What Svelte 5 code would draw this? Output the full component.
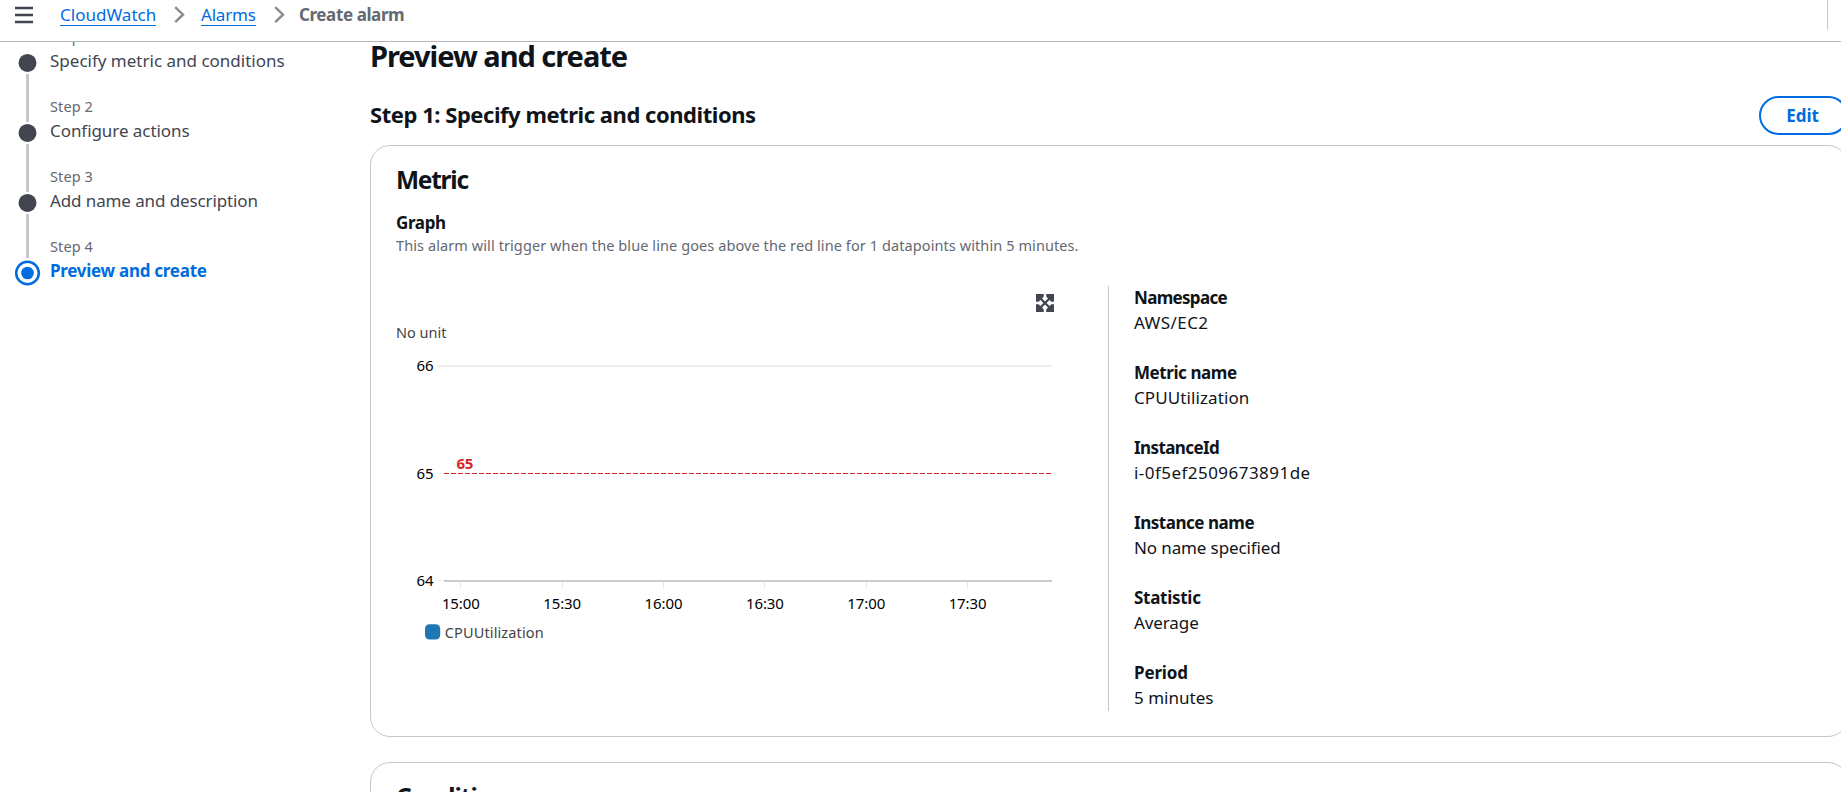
<script>
  const steps = [
    { name: 'Specify metric and conditions', ls: 0 },
    { name: 'Configure actions', ls: -0.06 },
    { name: 'Add name and description', ls: -0.11 },
    { name: 'Preview and create', ls: -0.27, active: true }
  ];
  const fields = [
    { label: 'Namespace', value: 'AWS/EC2', a: -0.68, b: 0.42 },
    { label: 'Metric name', value: 'CPUUtilization', a: -0.43, b: 0.1 },
    { label: 'InstanceId', value: 'i-0f5ef2509673891de', a: -0.58, b: 0.46 },
    { label: 'Instance name', value: 'No name specified', a: -0.46, b: -0.12 },
    { label: 'Statistic', value: 'Average', a: -0.28, b: -0.1 },
    { label: 'Period', value: '5 minutes', a: -0.15, b: 0.02 }
  ];
  const ticks = ['15:00', '15:30', '16:00', '16:30', '17:00', '17:30'].map((label, i) => ({
    label,
    x: 460.8 + i * 101.35
  }));
</script>

<div class="page">
  <header>
    <svg class="burger" width="18" height="18" viewBox="0 0 18 18">
      <path d="M0 2h18M0 9h18M0 16h18" stroke="#424650" stroke-width="2.4" />
    </svg>
    <nav class="crumbs">
      <a href="#cloudwatch">CloudWatch</a>
      <svg width="11" height="18" viewBox="0 0 11 18"><path d="M1.2 1.2 9 8.7 1.2 16.2" /></svg>
      <a href="#alarms" class="alarms">Alarms</a>
      <svg width="11" height="18" viewBox="0 0 11 18"><path d="M1.2 1.2 9 8.7 1.2 16.2" /></svg>
      <b>Create alarm</b>
    </nav>
    <span class="divider"></span>
  </header>

  <div class="body">
    <aside>
      <svg class="rail" width="50" height="270" viewBox="0 26 50 270">
        <path d="M27.5 74v48M27.5 144v48M27.5 214v44" stroke="#c6c6cd" stroke-width="3" />
        {#each steps as s, i}
          {#if s.active}
            <circle cx="27.5" cy={63 + i * 70} r="11.3" fill="#fff" stroke="#006ce0" stroke-width="2.5" />
            <circle cx="27.5" cy={63 + i * 70} r="6.3" fill="#006ce0" />
          {:else}
            <circle cx="27.5" cy={62.9 + i * 70} r="9" fill="#424650" />
          {/if}
        {/each}
      </svg>
      <ol>
        {#each steps as s, i}
          <li class:active={s.active}>
            <small>Step {i + 1}</small>
            <span style:letter-spacing="{s.ls}px">{s.name}</span>
          </li>
        {/each}
      </ol>
    </aside>

    <main>
      <h1>Preview and create</h1>
      <div class="head">
        <h2>Step 1: Specify metric and conditions</h2>
        <button>Edit</button>
      </div>

      <section class="card metric">
        <h3>Metric</h3>
        <div class="graph">Graph</div>
        <p>This alarm will trigger when the blue line goes above the red line for 1 datapoints within 5 minutes.</p>
        <div class="cols">
          <svg class="chart" width="712" height="425" viewBox="396 286 712 425">
            <g transform="translate(1036 294)" fill="#424650">
              <path d="M0 0H7.8V2.6L6 4.4 13.6 12 15.4 10.2H18V18H10.2V15.4L12 13.6 4.4 6 2.6 7.8H0Z" />
              <path d="M18 0V7.8H15.4L13.6 6 6 13.6 7.8 15.4V18H0V10.2H2.6L4.4 12 12 4.4 10.2 2.6V0Z" />
            </g>
            <text class="grey" x="396" y="338">No unit</text>
            <path d="M437 366H1052" stroke="#ededed" stroke-width="2" />
            <path d="M437 473.5H444M437 580.5H444" stroke="#ededed" />
            <path d="M444 473.5H1052" stroke="#d62728" stroke-dasharray="5 2" />
            <path d="M444 581H1052" stroke="#ccc" stroke-width="2" />
            <text class="num" x="433.5" y="371.3" text-anchor="end">66</text>
            <text class="num" x="433.5" y="478.5" text-anchor="end">65</text>
            <text class="num" x="433.5" y="586" text-anchor="end">64</text>
            <text class="limit" x="456.4" y="469">65</text>
            {#each ticks as t}
              <path d="M{Math.floor(t.x) + 0.5} 582v6" stroke="#e6e6e6" />
              <text class="num" x={t.x} y="609.3" text-anchor="middle">{t.label}</text>
            {/each}
            <rect x="425" y="624.2" width="15.2" height="15.4" rx="4.5" fill="#1f77b4" />
            <text class="grey" x="444.8" y="638.3" letter-spacing="0.12">CPUUtilization</text>
          </svg>
          <dl>
            {#each fields as f}
              <div>
                <dt style:letter-spacing="{f.a}px">{f.label}</dt>
                <dd style:letter-spacing="{f.b}px">{f.value}</dd>
              </div>
            {/each}
          </dl>
        </div>
      </section>

      <section class="card">
        <h3 class="cond">Conditions</h3>
      </section>
    </main>
  </div>
</div>

<style>
  :global(body) { background: #fff; overflow: hidden; }
  .page {
    width: 1841px; height: 792px; overflow: hidden;
    display: flex; flex-direction: column;
    font: 17px/25px "Noto Sans", sans-serif; color: #0f141a;
  }
  header {
    height: 41px; flex: none; display: flex; align-items: flex-start;
    border-bottom: 1px solid #b4b4bb; padding-right: 13px;
  }
  .burger { margin: 6px 27px 0 15px; }
  .crumbs { display: flex; align-items: flex-start; padding-top: 2px; }
  .crumbs a {
    color: #006ce0; text-decoration: none; height: 23px;
    border-bottom: 1px solid #006ce0; width: 96px; white-space: nowrap;
  }
  .crumbs a.alarms { width: 55px; letter-spacing: -0.2px; }
  .crumbs svg { margin: 4px 16px 0 18px; fill: none; stroke: #8c8c94; stroke-width: 2.5; }
  .crumbs b { color: #656871; letter-spacing: -0.4px; margin-left: -2px; }
  .divider { margin-left: auto; width: 1px; height: 30px; background: #c6c6cd; }
  .body { flex: 1; min-height: 0; display: flex; overflow: hidden; }
  aside { width: 370px; flex: none; display: flex; margin-top: -16px; }
  .rail { flex: none; }
  ol { list-style: none; margin: 0; padding: 0; display: flex; flex-direction: column; gap: 23px; }
  li { display: flex; flex-direction: column; gap: 2px; color: #424650; white-space: nowrap; }
  small { font-size: 14.5px; line-height: 20px; color: #656871; letter-spacing: 0.1px; }
  li.active span { font-weight: 700; color: #006ce0; }
  main { width: 1478px; flex: none; margin-top: -5px; }
  h1, h2, h3, p, dl, dd { margin: 0; }
  h1 { font-size: 29px; line-height: 38px; letter-spacing: -1.02px; }
  .head { display: flex; justify-content: space-between; align-items: center; margin-top: 21px; height: 39px; }
  h2 { font-size: 22px; line-height: 28px; padding-bottom: 3px; letter-spacing: -0.46px; }
  button {
    box-sizing: border-box; width: 89px; height: 39px; padding: 0 2px 1px 0;
    border: 2px solid #006ce0; border-radius: 20px; background: #fff;
    color: #006ce0; font: 700 17px/25px "Noto Sans", sans-serif;
  }
  .card { box-sizing: border-box; border: 1px solid #c6c6cd; border-radius: 20px; padding: 19px 25px 25px; }
  .metric { margin: 10px 0 25px; height: 592px; }
  h3 { font-size: 24.5px; line-height: 30px; letter-spacing: -1.25px; }
  .cond { letter-spacing: -1px; }
  .graph { font-weight: 700; margin-top: 15px; letter-spacing: -0.35px; }
  p { font-size: 14.5px; line-height: 20px; color: #656871; letter-spacing: 0.09px; }
  .cols { display: flex; margin-top: 31px; height: 425px; }
  .chart { flex: none; display: block; }
  .num { font-size: 15px; fill: #000; letter-spacing: -0.1px; }
  .grey { font-size: 14.5px; fill: #444; }
  .limit { font-size: 15px; font-weight: 700; fill: #d62728; letter-spacing: -0.2px; }
  dl { border-left: 1px solid #c6c6cd; padding-left: 25px; display: flex; flex-direction: column; gap: 25px; }
  dl div { margin-top: -1px; margin-bottom: 1px; }
  dt { font-weight: 700; }
</style>
